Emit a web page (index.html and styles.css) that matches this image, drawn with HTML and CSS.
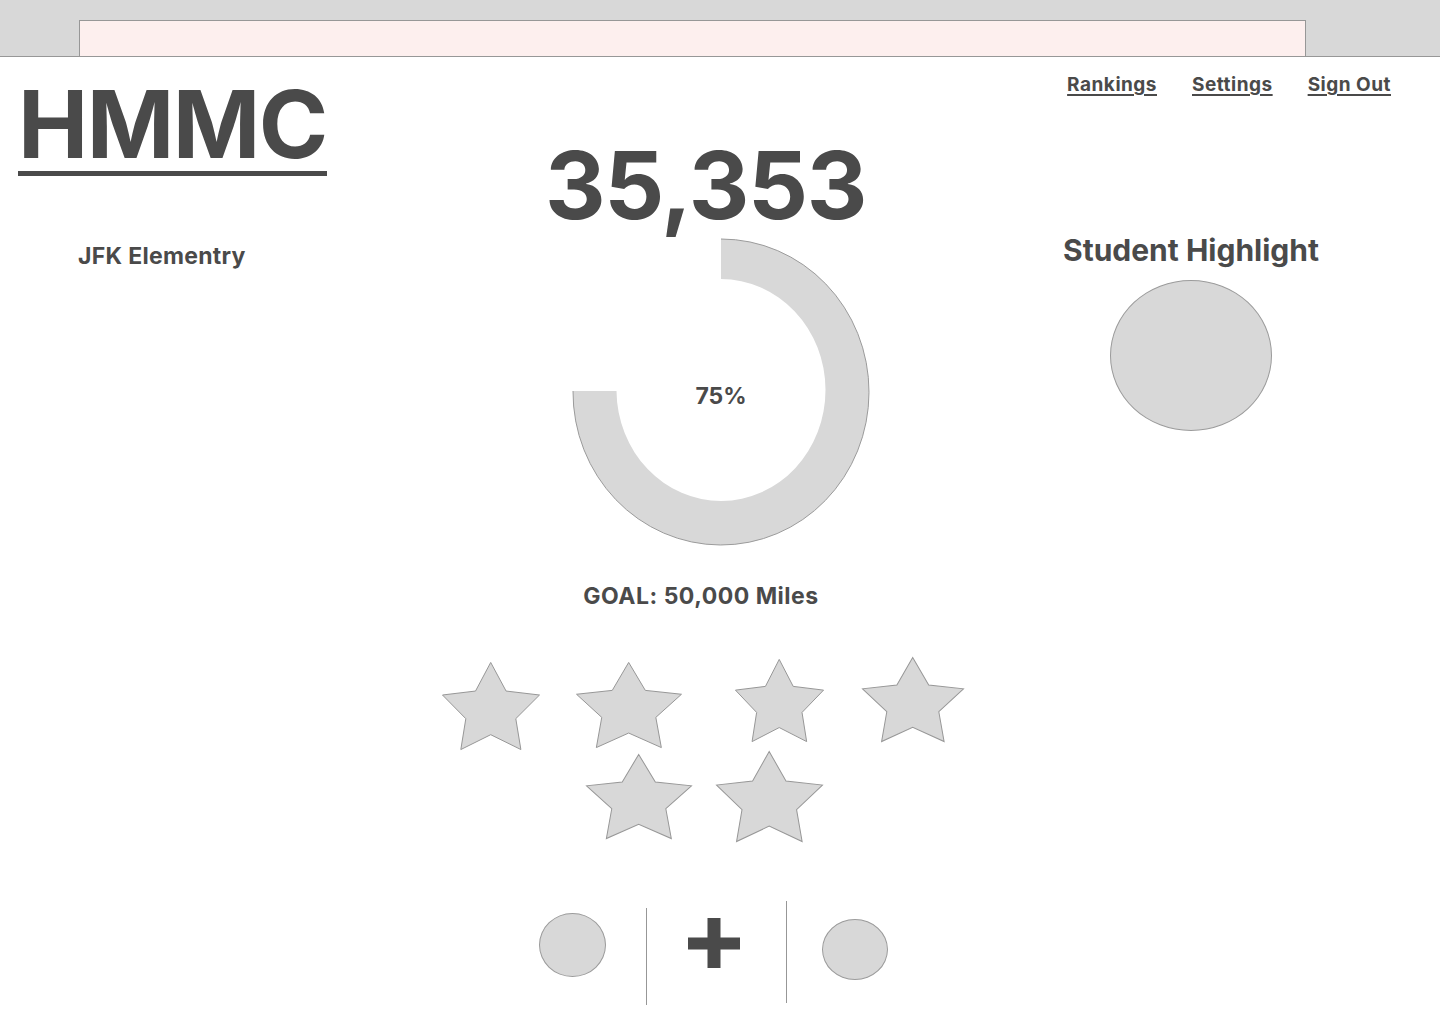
FILE: index.html
```html
<!DOCTYPE html>
<html lang="en">
<head>
<meta charset="utf-8">
<title>HMMC</title>
<link rel="stylesheet" href="styles.css">
</head>
<body>
<header class="topbar">
  <div class="address"></div>
</header>
<main class="page">
  <section class="col-left">
    <h1 class="logo">HMMC</h1>
    <h2 class="school">JFK Elementry</h2>
  </section>

  <section class="col-center">
    <div class="total">35,353</div>
    <div class="donut">
      <svg width="300" height="312" viewBox="0 0 300 312">
        <path d="M150,3 A148,153 0 1 1 2,155 L45.5,155 A104.5,111 0 1 0 150,43 Z" fill="#d8d8d8"/>
        <path d="M150,3 A148,153 0 1 1 2,155" fill="none" stroke="#9b9b9b" stroke-width="1"/>
      </svg>
      <div class="donut-label">75%</div>
    </div>
    <div class="goal">GOAL: 50,000 Miles</div>

    <div class="stars row1">
      <svg class="star s1" viewBox="0 0 100 100" preserveAspectRatio="none"><polygon points="49.7,0.5 65.4,33 99.5,37.5 75.3,64.4 80.5,99.5 49.7,82.6 19.2,99.5 24.3,64.4 0.5,37.5 34.2,33"/></svg>
      <svg class="star s2" viewBox="0 0 100 100" preserveAspectRatio="none"><polygon points="49.7,0.5 65.4,33 99.5,37.5 75.3,64.4 80.5,99.5 49.7,82.6 19.2,99.5 24.3,64.4 0.5,37.5 34.2,33"/></svg>
      <svg class="star s3" viewBox="0 0 100 100" preserveAspectRatio="none"><polygon points="49.7,0.5 65.4,33 99.5,37.5 75.3,64.4 80.5,99.5 49.7,82.6 19.2,99.5 24.3,64.4 0.5,37.5 34.2,33"/></svg>
      <svg class="star s4" viewBox="0 0 100 100" preserveAspectRatio="none"><polygon points="49.7,0.5 65.4,33 99.5,37.5 75.3,64.4 80.5,99.5 49.7,82.6 19.2,99.5 24.3,64.4 0.5,37.5 34.2,33"/></svg>
    </div>
    <div class="stars row2">
      <svg class="star s5" viewBox="0 0 100 100" preserveAspectRatio="none"><polygon points="49.7,0.5 65.4,33 99.5,37.5 75.3,64.4 80.5,99.5 49.7,82.6 19.2,99.5 24.3,64.4 0.5,37.5 34.2,33"/></svg>
      <svg class="star s6" viewBox="0 0 100 100" preserveAspectRatio="none"><polygon points="49.7,0.5 65.4,33 99.5,37.5 75.3,64.4 80.5,99.5 49.7,82.6 19.2,99.5 24.3,64.4 0.5,37.5 34.2,33"/></svg>
    </div>

    <div class="actions">
      <div class="dot dot-left"></div>
      <div class="divider divider-left"></div>
      <svg class="plus" width="52" height="50" viewBox="0 0 52 50">
        <rect x="19.5" y="0" width="13" height="50" fill="#4a4a4a"/>
        <rect x="0" y="19.5" width="52" height="12" fill="#4a4a4a"/>
      </svg>
      <div class="divider divider-right"></div>
      <div class="dot dot-right"></div>
    </div>
  </section>

  <section class="col-right">
    <nav class="nav">
      <a href="#">Rankings</a>
      <a href="#">Settings</a>
      <a href="#">Sign Out</a>
    </nav>
    <div class="highlight">
      <h2 class="highlight-title">Student Highlight</h2>
      <div class="avatar"></div>
    </div>
  </section>
</main>
</body>
</html>
```

FILE: styles.css
```css
* { box-sizing: border-box; }

html, body {
  margin: 0;
  padding: 0;
  background: #ffffff;
}

body {
  font-family: "Inter", "Lato", "Liberation Sans", sans-serif;
  font-weight: 700;
  color: #4a4a4a;
  width: 1440px;
  min-height: 1024px;
  overflow: hidden;
}

/* ---------- top bar ---------- */
.topbar {
  height: 57px;
  background: #d8d8d8;
  border-bottom: 1px solid #979797;
  padding: 20px 0 0 79px;
}

.address {
  width: 1227px;
  height: 37px;
  background: #fdefee;
  border: 1px solid #979797;
}

/* ---------- page grid ---------- */
.page {
  display: grid;
  grid-template-columns: 400px 620px 420px;
  align-items: start;
}

/* ---------- left column ---------- */
.col-left {
  display: flex;
  flex-direction: column;
  align-items: flex-start;
}

.logo {
  margin: 21px 0 0 18px;
  font-size: 94px;
  line-height: 93px;
  font-weight: 700;
  letter-spacing: -1.5px;
  border-bottom: 5px solid #4a4a4a;
}

.school {
  margin: 69px 0 0 78px;
  font-size: 23px;
  line-height: 23px;
  font-weight: 700;
  letter-spacing: 0.3px;
}

/* ---------- center column ---------- */
.col-center {
  display: flex;
  flex-direction: column;
  align-items: center;
}

.total {
  margin-top: 81px;
  margin-right: 9px;
  font-size: 94px;
  line-height: 94px;
  letter-spacing: -1.4px;
}

.donut {
  position: relative;
  margin-top: 4px;
  margin-left: 22px;
  width: 300px;
  height: 312px;
}

.donut svg { display: block; }

.donut-label {
  position: absolute;
  top: 149px;
  left: 0;
  right: 0;
  text-align: center;
  font-size: 23px;
  line-height: 23px;
}

.goal {
  margin-top: 37px;
  margin-right: 18px;
  font-size: 23px;
  line-height: 23px;
  letter-spacing: 0.5px;
}

.stars {
  display: flex;
  align-items: flex-start;
}

.row1 {
  margin-top: 49px;
  margin-right: 14px;
  height: 93px;
}

.row2 {
  margin-top: 1px;
  margin-right: 11px;
  height: 91px;
}

.star {
  display: block;
  overflow: visible;
}

.star polygon {
  fill: #d8d8d8;
  stroke: #979797;
  stroke-width: 1;
  vector-effect: non-scaling-stroke;
}

.s1 { width: 98px;  height: 88px; margin-top: 5px; }
.s2 { width: 106px; height: 86px; margin-top: 5px; margin-left: 36px; }
.s3 { width: 89px;  height: 83px; margin-top: 2px; margin-left: 53px; }
.s4 { width: 102px; height: 85px; margin-top: 0;   margin-left: 38px; }
.s5 { width: 106px; height: 85px; margin-top: 3px; }
.s6 { width: 107px; height: 91px; margin-top: 0;   margin-left: 24px; }

/* ---------- bottom actions ---------- */
.actions {
  display: flex;
  align-items: flex-start;
  margin-top: 59px;
  margin-left: 7px;
}

.dot {
  background: #d8d8d8;
  border: 1px solid #9b9b9b;
  border-radius: 50%;
}

.dot-left {
  width: 67px;
  height: 64px;
  margin-top: 12px;
}

.dot-right {
  width: 66px;
  height: 61px;
  margin-top: 18px;
  margin-left: 35px;
}

.divider {
  width: 1px;
  background: #979797;
}

.divider-left {
  height: 97px;
  margin-top: 7px;
  margin-left: 40px;
}

.divider-right {
  height: 102px;
  margin-top: 0;
  margin-left: 46px;
}

.plus {
  display: block;
  margin-top: 17px;
  margin-left: 41px;
}

/* ---------- right column ---------- */
.col-right {
  display: flex;
  flex-direction: column;
}

.nav {
  display: flex;
  justify-content: flex-end;
  gap: 35px;
  margin-top: 19px;
  padding-right: 49px;
  font-size: 19px;
  line-height: 18.5px;
  letter-spacing: 0.5px;
}

.nav a {
  color: #4a4a4a;
  text-decoration: underline;
  text-decoration-thickness: 1.5px;
  text-underline-offset: 3px;
}

.highlight {
  width: 300px;
  margin-left: 21px;
  margin-top: 140px;
  display: flex;
  flex-direction: column;
  align-items: center;
}

.highlight-title {
  margin: 0;
  font-size: 30px;
  line-height: 30px;
  font-weight: 700;
}

.avatar {
  width: 162px;
  height: 151px;
  margin-top: 15px;
  background: #d8d8d8;
  border: 1px solid #9b9b9b;
  border-radius: 50%;
}
```
